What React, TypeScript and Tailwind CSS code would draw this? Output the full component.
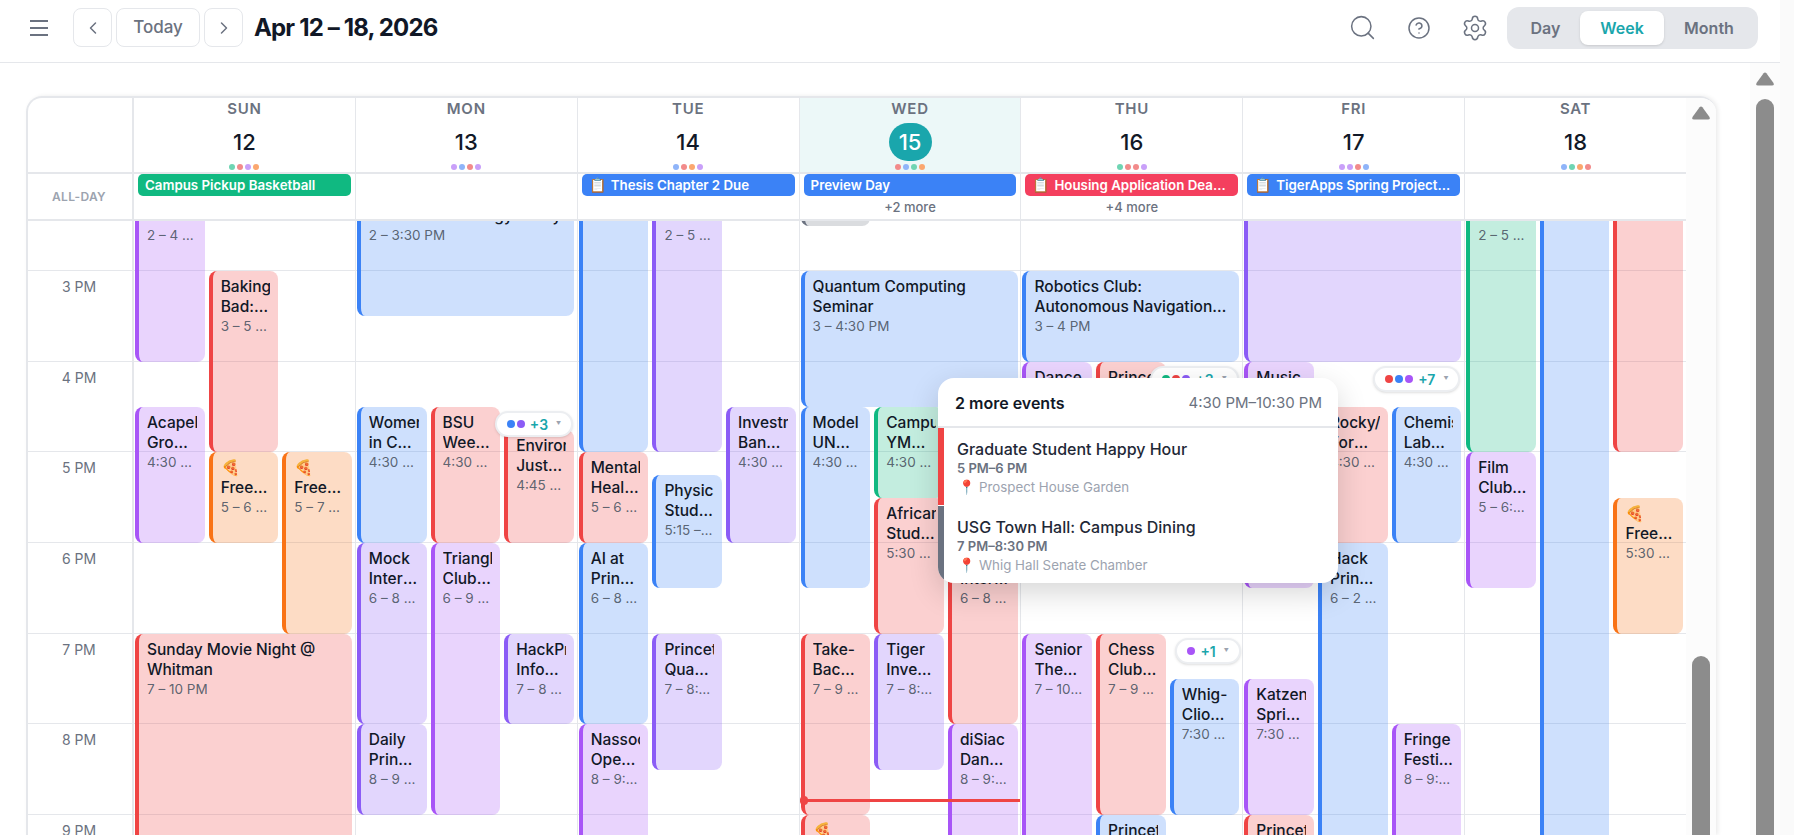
import React from "react";
import { ChevronLeft, ChevronRight, CircleHelp, Search, Settings } from "lucide-react";

const HOUR = 90.67;
const SLOT = 69.67;

type Color = "blue" | "red" | "purple" | "violet" | "orange" | "green" | "gray";

type CalEvent = {
  day: number;
  slot?: number;
  from: number;
  to: number;
  color: Color;
  title: string;
  time: string;
};

const eventColors: Record<Color, string> = {
  blue: "border-[#3b82f6] bg-[#3b82f6]/25",
  red: "border-[#ef4444] bg-[#ef4444]/25",
  purple: "border-[#a855f7] bg-[#a855f7]/25",
  violet: "border-[#8b5cf6] bg-[#8b5cf6]/25",
  orange: "border-[#f97316] bg-[#f97316]/25",
  green: "border-[#10b981] bg-[#10b981]/25",
  gray: "border-[#6b7280] bg-[#6b7280]/25",
};

const dotColors: Record<string, string> = {
  r: "bg-[#f28b8b]",
  b: "bg-[#8fb4f9]",
  g: "bg-[#6fd5b3]",
  o: "bg-[#fba76f]",
  p: "bg-[#c9a0f9]",
};

const days = [
  { name: "SUN", date: 12, dots: "grpo" },
  { name: "MON", date: 13, dots: "pbrp" },
  { name: "TUE", date: 14, dots: "brop" },
  { name: "WED", date: 15, dots: "rbgo", today: true },
  { name: "THU", date: 16, dots: "grrp" },
  { name: "FRI", date: 17, dots: "pprb" },
  { name: "SAT", date: 18, dots: "bgor" },
];

const events: CalEvent[] = [
  // sunday
  { day: 0, slot: 0, from: 14, to: 16, color: "purple", title: "Spring Arts Fair", time: "2 – 4 PM" },
  { day: 0, slot: 1, from: 15, to: 17, color: "red", title: "Baking Bad: Cupcake Social", time: "3 – 5 PM" },
  { day: 0, slot: 0, from: 16.5, to: 18, color: "purple", title: "Acapella Group Concert", time: "4:30 – 6 PM" },
  { day: 0, slot: 1, from: 17, to: 18, color: "orange", title: "🍕 Free Food Social", time: "5 – 6 PM" },
  { day: 0, slot: 2, from: 17, to: 19, color: "orange", title: "🍕 Free Food Study Break", time: "5 – 7 PM" },
  { day: 0, from: 19, to: 22, color: "red", title: "Sunday Movie Night @ Whitman", time: "7 – 10 PM" },
  // monday
  { day: 1, from: 14, to: 15.5, color: "blue", title: "Research Symposium: Climate and Energy Policy", time: "2 – 3:30 PM" },
  { day: 1, slot: 0, from: 16.5, to: 18, color: "blue", title: "Women in CS Panel", time: "4:30 – 6 PM" },
  { day: 1, slot: 1, from: 16.5, to: 18, color: "red", title: "BSU Weekly Meeting", time: "4:30 – 6 PM" },
  { day: 1, slot: 2, from: 16.75, to: 18, color: "red", title: "Environmental Justice Forum", time: "4:45 – 6 PM" },
  { day: 1, slot: 0, from: 18, to: 20, color: "violet", title: "Mock Interviews Workshop", time: "6 – 8 PM" },
  { day: 1, slot: 1, from: 18, to: 21, color: "purple", title: "Triangle Club Rehearsal", time: "6 – 9 PM" },
  { day: 1, slot: 2, from: 19, to: 20, color: "violet", title: "HackPrinceton Info Session", time: "7 – 8 PM" },
  { day: 1, slot: 0, from: 20, to: 21, color: "violet", title: "Daily Princetonian Meeting", time: "8 – 9 PM" },
  // tuesday
  { day: 2, slot: 0, from: 13, to: 17, color: "blue", title: "Lab Hours", time: "1 – 5 PM" },
  { day: 2, slot: 1, from: 14, to: 17, color: "violet", title: "Design Thinking", time: "2 – 5 PM" },
  { day: 2, slot: 2, from: 16.5, to: 18, color: "violet", title: "Investment Banking Panel", time: "4:30 – 6 PM" },
  { day: 2, slot: 0, from: 17, to: 18, color: "red", title: "Mental Health Forum", time: "5 – 6 PM" },
  { day: 2, slot: 1, from: 17.25, to: 18.5, color: "blue", title: "Physics Study Group", time: "5:15 – 6:30 PM" },
  { day: 2, slot: 0, from: 18, to: 20, color: "blue", title: "AI at Princeton Talk", time: "6 – 8 PM" },
  { day: 2, slot: 1, from: 19, to: 20.5, color: "violet", title: "Princeton Quantum Club", time: "7 – 8:30 PM" },
  { day: 2, slot: 0, from: 20, to: 23, color: "purple", title: "Nassoons Open Rehearsal", time: "8 – 9:30 PM" },
  // wednesday
  { day: 3, slot: 0, from: 13.5, to: 14.5, color: "gray", title: "Office Hours", time: "1:30 – 2:30 PM" },
  { day: 3, from: 15, to: 16.5, color: "blue", title: "Quantum Computing Seminar", time: "3 – 4:30 PM" },
  { day: 3, slot: 0, from: 16.5, to: 18.5, color: "blue", title: "Model UN Practice", time: "4:30 – 6:30 PM" },
  { day: 3, slot: 1, from: 16.5, to: 17.5, color: "green", title: "Campus YMCA Meetup", time: "4:30 – 5:30 PM" },
  { day: 3, slot: 1, from: 17.5, to: 19, color: "red", title: "African Studies Lecture", time: "5:30 – 7 PM" },
  { day: 3, slot: 2, from: 18, to: 20, color: "red", title: "Startup Internship Panel", time: "6 – 8 PM" },
  { day: 3, slot: 0, from: 19, to: 21, color: "red", title: "Take-Back the Night", time: "7 – 9 PM" },
  { day: 3, slot: 1, from: 19, to: 20.5, color: "violet", title: "Tiger Investing Club", time: "7 – 8:30 PM" },
  { day: 3, slot: 2, from: 20, to: 23, color: "purple", title: "diSiac Dance Show", time: "8 – 9:30 PM" },
  { day: 3, slot: 0, from: 21, to: 23, color: "red", title: "🍕 Free Pizza", time: "9 – 10 PM" },
  // thursday
  { day: 4, from: 15, to: 16, color: "blue", title: "Robotics Club: Autonomous Navigation Systems", time: "3 – 4 PM" },
  { day: 4, slot: 0, from: 16, to: 17.5, color: "purple", title: "Dance Workshop", time: "4 – 5:30 PM" },
  { day: 4, slot: 1, from: 16, to: 18, color: "red", title: "Princeton Debate", time: "4 – 6 PM" },
  { day: 4, slot: 0, from: 19, to: 22, color: "purple", title: "Senior Thesis Play", time: "7 – 10 PM" },
  { day: 4, slot: 1, from: 19, to: 21, color: "red", title: "Chess Club Meeting", time: "7 – 9 PM" },
  { day: 4, slot: 2, from: 19.5, to: 21, color: "blue", title: "Whig-Clio Debate", time: "7:30 – 9 PM" },
  { day: 4, slot: 1, from: 21, to: 23, color: "blue", title: "Princeton Jazz", time: "9 – 11 PM" },
  // friday
  { day: 5, from: 13, to: 16, color: "violet", title: "TigerApps Demo", time: "1 – 4 PM" },
  { day: 5, slot: 0, from: 16, to: 18.5, color: "purple", title: "Music Festival", time: "4 – 6:30 PM" },
  { day: 5, slot: 1, from: 16.5, to: 18, color: "red", title: "Rocky/ Formal Dinner", time: "4:30 – 6 PM" },
  { day: 5, slot: 2, from: 16.5, to: 18, color: "blue", title: "Chemistry Lab Review", time: "4:30 – 6 PM" },
  { day: 5, slot: 1, from: 18, to: 26, color: "blue", title: "Hack Princeton Kickoff", time: "6 – 2 AM" },
  { day: 5, slot: 0, from: 19.5, to: 21, color: "purple", title: "Katzenjammers Spring Show", time: "7:30 – 9 PM" },
  { day: 5, slot: 2, from: 20, to: 23, color: "purple", title: "Fringe Festival Show", time: "8 – 9:30 PM" },
  { day: 5, slot: 0, from: 21, to: 23, color: "red", title: "Princeton Players", time: "9 – 11 PM" },
  // saturday
  { day: 6, slot: 0, from: 14, to: 17, color: "green", title: "Garden Volunteering", time: "2 – 5 PM" },
  { day: 6, slot: 1, from: 13, to: 26, color: "blue", title: "Hackathon", time: "1 PM – 2 AM" },
  { day: 6, slot: 2, from: 13, to: 17, color: "red", title: "Reunion Planning", time: "1 – 5 PM" },
  { day: 6, slot: 0, from: 17, to: 18.5, color: "purple", title: "Film Club Screening", time: "5 – 6:30 PM" },
  { day: 6, slot: 2, from: 17.5, to: 19, color: "orange", title: "🍕 Free Food Night", time: "5:30 – 7 PM" },
];

const badges = [
  { day: 1, left: 139, top: 411, dots: ["bg-[#3b82f6]", "bg-[#8b5cf6]"], more: "+3" },
  { day: 4, left: 129, top: 366, dots: ["bg-[#10b981]", "bg-[#ef4444]", "bg-[#8b5cf6]"], more: "+3" },
  { day: 5, left: 130, top: 366, dots: ["bg-[#ef4444]", "bg-[#3b82f6]", "bg-[#a855f7]"], more: "+7" },
  { day: 4, left: 154, top: 638, dots: ["bg-[#a855f7]"], more: "+1" },
];

const allDay: Record<number, { title: string; color: string; memo?: boolean; more?: string }> = {
  0: { title: "Campus Pickup Basketball", color: "bg-[#10b981]" },
  2: { title: "Thesis Chapter 2 Due", color: "bg-[#3b82f6]", memo: true },
  3: { title: "Preview Day", color: "bg-[#3b82f6]", more: "+2 more" },
  4: { title: "Housing Application Deadline", color: "bg-[#f43f5e]", memo: true, more: "+4 more" },
  5: { title: "TigerApps Spring Project Showcase", color: "bg-[#3b82f6]", memo: true },
};

const hours = ["2 PM", "3 PM", "4 PM", "5 PM", "6 PM", "7 PM", "8 PM", "9 PM", "10 PM"];

const ScrollArrow = () => (
  <svg viewBox="0 0 18 14" className="h-[14px] w-[18px] fill-[#8c8c8c]">
    <path d="M9 0.5 Q9.8 0.5 10.4 1.3 L17.5 11 Q18.4 13.5 16 13.5 L2 13.5 Q-0.4 13.5 0.5 11 L7.6 1.3 Q8.2 0.5 9 0.5 Z" />
  </svg>
);

const EventCard: React.FC<{ ev: CalEvent }> = ({ ev }) => {
  const full = ev.slot === undefined;
  const left = full ? 1 : 1 + (ev.slot as number) * (SLOT + 4);
  const width = full ? 217 : SLOT;
  return (
    <div
      className={`absolute overflow-hidden rounded-lg border-l-4 pl-2 pr-2 pt-[6px] ${eventColors[ev.color]}`}
      style={{ top: (ev.from - 14) * HOUR + 1, height: (ev.to - ev.from) * HOUR, left, width }}
    >
      <div className="line-clamp-2 text-[15.5px] leading-5 font-medium text-[#111827]">{ev.title}</div>
      <div className="truncate text-[13.5px] leading-[18px] text-[#4b5563]/90">{ev.time}</div>
    </div>
  );
};

const Popup = () => (
  <div className="absolute left-[938px] top-[378px] z-30 h-[205px] w-[400px] overflow-hidden rounded-2xl bg-white shadow-[0_10px_30px_rgba(0,0,0,0.16)]">
    <div className="flex h-[50px] items-center justify-between border-b-2 border-[#e5e7eb] pl-[17px] pr-[16px] pt-[2px]">
      <span className="text-[16px] font-semibold text-[#111827]">2 more events</span>
      <span className="text-[15px] text-[#6b7280]">4:30 PM–10:30 PM</span>
    </div>
    <div className="flex h-[77px] flex-col border-l-[6px] border-[#ef4444] pl-[13px] pt-[11px]">
      <div className="text-[16px] leading-5 font-medium text-[#1f2937]">Graduate Student Happy Hour</div>
      <div className="text-[13px] leading-[18px] font-semibold text-[#6b7280]">5 PM–6 PM</div>
      <div className="mt-[1px] flex items-center gap-[5px] text-[13.3px] leading-[18px] text-[#9ca3af]">
        <span className="w-[17px] pl-[1px] text-[14px]">📍</span>Prospect House Garden
      </div>
    </div>
    <div className="mt-[1px] flex h-[77px] flex-col border-l-[6px] border-[#6b7280] pl-[13px] pt-[11px]">
      <div className="text-[16px] leading-5 font-medium text-[#1f2937]">USG Town Hall: Campus Dining</div>
      <div className="text-[13px] leading-[18px] font-semibold text-[#6b7280]">7 PM–8:30 PM</div>
      <div className="mt-[1px] flex items-center gap-[5px] text-[13.3px] leading-[18px] text-[#9ca3af]">
        <span className="w-[17px] pl-[1px] text-[14px]">📍</span>Whig Hall Senate Chamber
      </div>
    </div>
  </div>
);

export default function App() {
  return (
    <div className="relative flex h-screen w-full overflow-hidden bg-white font-['Inter',sans-serif]">
      <div className="flex w-[1780px] shrink-0 flex-col">
        {/* top bar */}
        <header className="flex h-[63px] shrink-0 items-center border-b border-[#e5e7eb] pb-[7px] pl-[30px] pr-[22px]">
          <svg viewBox="0 0 18 18" className="h-[18px] w-[18px] stroke-[#6b7280]" fill="none" strokeWidth="1.8">
            <path d="M0 2h18M0 9h18M0 16h18" />
          </svg>
          <div className="ml-[25px] flex items-center gap-[4px]">
            <button className="flex h-[39px] w-[39px] items-center justify-center rounded-lg border border-[#e5e7eb] text-[#6b7280]">
              <ChevronLeft size={20} strokeWidth={1.8} />
            </button>
            <button className="flex h-[39px] w-[84px] items-center justify-center rounded-lg border border-[#e5e7eb] text-[17px] font-medium text-[#6b7280]">
              Today
            </button>
            <button className="flex h-[39px] w-[39px] items-center justify-center rounded-lg border border-[#e5e7eb] text-[#6b7280]">
              <ChevronRight size={20} strokeWidth={1.8} />
            </button>
          </div>
          <h1 className="ml-[11px] text-[24px] font-bold tracking-[-0.035em] text-[#111827]">Apr 12 – 18, 2026</h1>
          <div className="ml-auto flex items-center gap-[30px] text-[#6b7280]">
            <Search size={29} strokeWidth={1.25} />
            <CircleHelp size={24} strokeWidth={1.5} />
            <Settings size={28} strokeWidth={1.3} />
          </div>
          <div className="ml-[18px] flex h-[42px] items-center rounded-xl bg-[#e5e7eb] px-[4px] text-[16px] font-semibold text-[#6b7280]">
            <span className="w-[69px] text-center">Day</span>
            <span className="flex h-[34px] w-[84px] items-center justify-center rounded-lg bg-white text-[#1aa6ac] shadow-sm">Week</span>
            <span className="w-[90px] text-center">Month</span>
          </div>
        </header>

        <div className="flex min-h-0 flex-1 pl-[26px]">
          <div className="mt-[33px] flex h-[739px] w-[1690px] shrink-0 overflow-hidden rounded-t-2xl border-l-2 border-t-2 border-[#e5e7eb] shadow-[2px_0_4px_rgba(0,0,0,0.08)]">
            <div className="flex min-w-0 flex-1 flex-col">
              {/* day headings */}
              <div className="flex h-[74px] shrink-0">
                <div className="w-[106px] shrink-0 border-r-2 border-[#e5e7eb]" />
                {days.map((d) => (
                  <div
                    key={d.name}
                    className={`relative flex min-w-0 flex-1 flex-col items-center border-r border-[#e5e7eb] pt-[2px] last:border-r-0 ${d.today ? "bg-[#ecf8f8]" : ""}`}
                  >
                    <div className="text-[15px] leading-[18px] font-semibold tracking-[0.05em] text-[#6b7280]">{d.name}</div>
                    <div
                      className={`mt-[5px] flex h-[38px] w-[43px] items-center justify-center rounded-full text-[22px] font-medium ${d.today ? "bg-[#1aa6ac] text-white" : "text-[#111827]"}`}
                    >
                      {d.date}
                    </div>
                    <div className="mt-[3px] flex gap-[2px]">
                      {d.dots.split("").map((c, i) => (
                        <span key={i} className={`h-[6px] w-[6px] rounded-full ${dotColors[c]}`} />
                      ))}
                    </div>
                  </div>
                ))}
              </div>

              {/* all-day row */}
              <div className="flex h-[49px] shrink-0 border-y-2 border-[#e5e7eb]">
                <div className="flex w-[106px] shrink-0 items-center justify-center border-r-2 border-[#e5e7eb] pr-[2px] text-[12px] font-semibold tracking-wide text-[#9ca3af]">
                  ALL-DAY
                </div>
                {days.map((d, i) => {
                  const chip = allDay[i];
                  return (
                    <div key={d.name} className="min-w-0 flex-1 border-r border-[#e5e7eb] px-[4px] last:border-r-0">
                      {chip && (
                        <div className={`truncate rounded-[5px] px-[7px] text-[13.3px] leading-[22px] font-semibold text-white ${chip.color}`}>
                          {chip.memo && <span className="mr-[5px] text-[14px]">📋</span>}
                          {chip.title}
                        </div>
                      )}
                      {chip?.more && (
                        <div className="mt-[3px] text-center text-[13px] leading-4 font-medium text-[#6b7280]">{chip.more}</div>
                      )}
                    </div>
                  );
                })}
              </div>

              {/* time grid, scrolled down to about 2:30 PM */}
              <div className="min-h-0 flex-1 overflow-hidden">
                <div className="-mt-[41.67px] flex">
                  <div className="w-[106px] shrink-0 border-r-2 border-[#e5e7eb]">
                    {hours.map((h) => (
                      <div key={h} className="h-[90.67px] border-t border-[#e5e7eb] pr-[2px] pt-[6px] text-center text-[14px] leading-5 text-[#6b7280]">
                        {h}
                      </div>
                    ))}
                  </div>
                  {days.map((d, i) => (
                    <div key={d.name} className="relative min-w-0 flex-1 border-r border-[#e5e7eb] last:border-r-0">
                      {hours.map((h) => (
                        <div key={h} className="h-[90.67px] border-t border-[#e5e7eb]" />
                      ))}
                      {events
                        .filter((ev) => ev.day === i)
                        .map((ev) => (
                          <EventCard key={ev.title} ev={ev} />
                        ))}
                      {badges
                        .filter((b) => b.day === i)
                        .map((b) => (
                          <div
                            key={b.top}
                            className="absolute z-10 flex h-[26px] items-center gap-[2px] rounded-full border-2 border-[#eceef1] bg-white pl-[10px] pr-[10px] shadow-sm"
                            style={{ left: b.left, top: b.top - 179.33 }}
                          >
                            {b.dots.map((c) => (
                              <span key={c} className={`h-[8px] w-[8px] rounded-full ${c}`} />
                            ))}
                            <span className="ml-[3px] text-[14px] font-semibold text-[#1aa6ac]">{b.more}</span>
                            <span className="ml-[6px] text-[5px] text-[#9ca3af]">▼</span>
                          </div>
                        ))}
                      {d.today && (
                        <div className="absolute left-0 right-0 z-20 h-[3px] bg-[#ef4444]" style={{ top: 620 }}>
                          <span className="absolute left-0 -top-[3px] h-[9px] w-[8px] rounded-full bg-[#ef4444]" />
                        </div>
                      )}
                    </div>
                  ))}
                </div>
              </div>
            </div>

            {/* inner scrollbar */}
            <div className="flex w-[30px] shrink-0 flex-col bg-[#fcfcfc] px-[6px] pt-[8px]">
              <ScrollArrow />
              <div className="mt-auto h-[179px] rounded-t-full bg-[#8c8c8c]" />
            </div>
          </div>

          {/* page scrollbar */}
          <div className="ml-[34px] flex w-[30px] shrink-0 flex-col bg-[#fcfcfc] px-[6px] pt-[9px]">
            <ScrollArrow />
            <div className="mt-[13px] flex-1 rounded-t-full bg-[#8c8c8c]" />
          </div>
        </div>
      </div>
      <div className="flex-1 bg-[#fafafa]" />
      <Popup />
    </div>
  );
}
